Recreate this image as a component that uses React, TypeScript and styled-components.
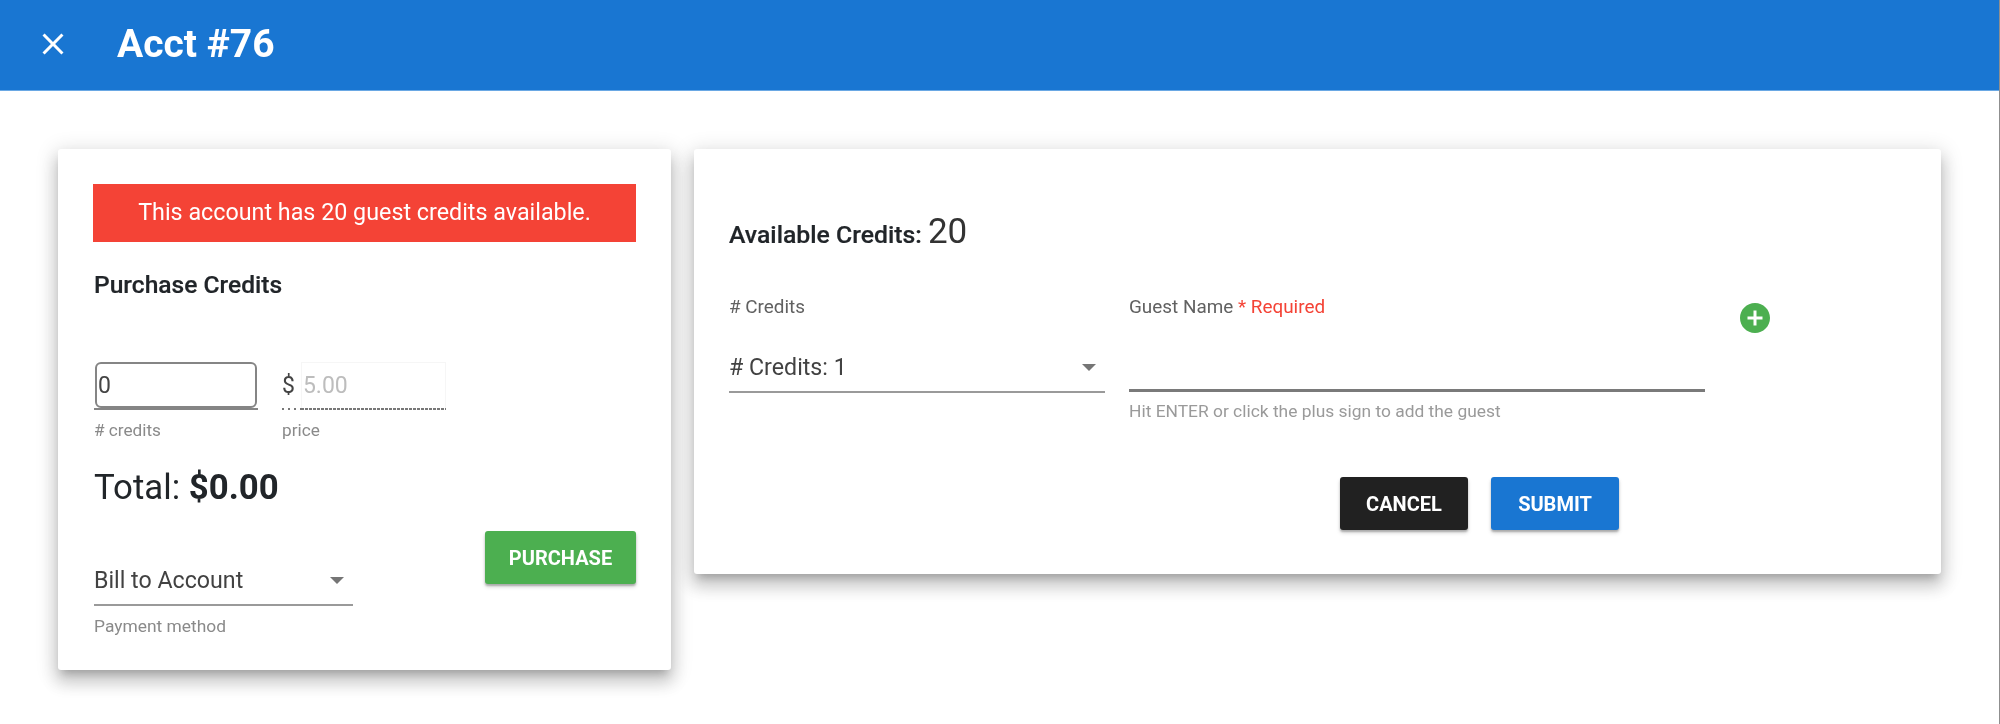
import React from "react";
import styled, { createGlobalStyle } from "styled-components";

const Global = createGlobalStyle`
  html, body { margin: 0; padding: 0; background: #fff; }
  body { font-family: Roboto, "Liberation Sans", sans-serif; color: #212529; }
`;

const Page = styled.div`
  box-sizing: border-box;
  width: 2000px;
  height: 724px;
  overflow: hidden;
  background: #fff;
  border-right: 1px solid #8f8f8f;
  filter: blur(0.35px);
`;

const Header = styled.header`
  box-sizing: border-box;
  height: 91px;
  background: #1976d2;
  border-bottom: 1px solid #6aa8e4;
  display: flex;
  align-items: center;
  color: #fff;
  padding: 0 0 2px 35px;
  gap: 46px;
`;

const CloseBtn = styled.span`
  display: flex;
  width: 36px;
  height: 36px;
`;

const Title = styled.h1`
  margin: 0;
  font-size: 39px;
  font-weight: 700;
  line-height: 1;
`;

const Main = styled.main`
  display: flex;
  align-items: flex-start;
  gap: 23px;
  padding: 58px 0 0 58px;
`;

const Card = styled.section`
  box-sizing: border-box;
  background: #fff;
  border-radius: 3px;
  box-shadow: 0 7px 8px -4px rgba(0,0,0,.2), 0 12px 16px 2px rgba(0,0,0,.14), 0 4px 20px 4px rgba(0,0,0,.12);
`;

const LeftCard = styled(Card)`
  width: 613px;
  height: 521px;
  padding: 35px 35px 0;
  display: flex;
  flex-direction: column;
`;

const RightCard = styled(Card)`
  width: 1247px;
  height: 425px;
  padding: 0 35px;
  display: flex;
  flex-direction: column;
`;

const Alert = styled.div`
  box-sizing: border-box;
  height: 58px;
  padding-bottom: 2px;
  background: #f44336;
  color: #fff;
  font-size: 23.3px;
  display: flex;
  align-items: center;
  justify-content: center;
`;

const SectionTitle = styled.div`
  margin-top: 29px;
  font-size: 24.6px;
  font-weight: 500;
  line-height: 28px;
  padding-left: 1px;
  -webkit-text-stroke: 0.2px currentColor;
`;

const NumberRow = styled.div`
  margin-top: 63px;
  display: flex;
  gap: 25px;
  padding-left: 2px;
`;

const Field = styled.div<{ $w: number }>`
  width: ${(p) => p.$w}px;
  display: flex;
  flex-direction: column;
`;

const CreditInputBox = styled.div`
  box-sizing: border-box;
  height: 46px;
  border: 2px solid #858585;
  border-radius: 6px;
  font-size: 23px;
  display: flex;
  align-items: center;
  padding-left: 1px;
  color: #444;
`;

const SolidLine = styled.div`
  height: 2px;
  margin: 0 -1px;
  background: #858585;
`;

const PriceBox = styled.div`
  height: 46px;
  display: flex;
  align-items: center;
  font-size: 23px;
  color: #444;
`;

const PriceValue = styled.div`
  box-sizing: border-box;
  flex: 1;
  height: 46px;
  margin-left: 6px;
  padding-left: 1px;
  display: flex;
  align-items: center;
  color: #bdbdbd;
  border: 1px solid #f6f6f6;
  border-bottom: none;
`;

const DottedRow = styled.div`
  display: flex;
  height: 2px;
`;

const Dots = styled.div<{ $w?: number; $on: number; $off: number }>`
  ${(p) => (p.$w ? `width: ${p.$w}px;` : "flex: 1;")}
  background: repeating-linear-gradient(
    to right,
    #777 0 ${(p) => p.$on}px,
    transparent ${(p) => p.$on}px ${(p) => p.$on + p.$off}px
  );
`;

const Helper = styled.div<{ $nudge?: number }>`
  margin-top: 10px;
  margin-left: ${(p) => p.$nudge ?? 0}px;
  font-size: 17.2px;
  line-height: 20px;
  color: #8a8a8a;
`;

const Total = styled.div`
  margin-top: 26px;
  padding-left: 1px;
  font-size: 34.8px;
  line-height: 42px;
  color: #212529;
`;

const Bold = styled.b`
  font-weight: 700;
`;

const BottomRow = styled.div`
  margin-top: 23px;
  padding-left: 1px;
  display: flex;
  justify-content: space-between;
  align-items: flex-start;
`;

const PaymentColumn = styled.div`
  margin-top: 25px;
`;

const PaymentHelper = styled(Helper)`
  font-size: 17.4px;
`;

const SelectBox = styled.div<{ $w: number; $h: number }>`
  box-sizing: border-box;
  width: ${(p) => p.$w}px;
  height: ${(p) => p.$h}px;
  display: flex;
  align-items: center;
  justify-content: space-between;
  font-size: 23.2px;
  color: #424242;
  border-bottom: 2px solid #9a9a9a;
`;

const Caret = styled.span`
  width: 0;
  height: 0;
  margin-right: 9px;
  border-left: 7px solid transparent;
  border-right: 7px solid transparent;
  border-top: 7px solid #757575;
`;

const Button = styled.button<{ $bg: string; $w: number }>`
  width: ${(p) => p.$w}px;
  height: 53px;
  border: 0;
  border-radius: 3px;
  background: ${(p) => p.$bg};
  color: #fff;
  font-family: inherit;
  font-size: 20px;
  font-weight: 700;
  padding: 0;
  box-shadow: 0 2px 2px rgba(0,0,0,.24), 0 3px 4px rgba(0,0,0,.14);
`;

const Available = styled.div`
  margin-top: 61px;
  display: flex;
  align-items: baseline;
  gap: 6px;
  font-size: 24.8px;
  font-weight: 500;
  line-height: 44px;
  -webkit-text-stroke: 0.2px currentColor;
`;

const AvailableCount = styled.span`
  font-size: 35px;
  font-weight: 400;
  color: #333;
  -webkit-text-stroke: 0;
`;

const GuestGrid = styled.div`
  margin-top: 39px;
  display: grid;
  grid-template-columns: 376px 576px auto;
  column-gap: 24px;
  align-items: start;
`;

const FieldLabel = styled.div`
  font-size: 18.9px;
  line-height: 22px;
  color: #616161;
`;

const Required = styled.span`
  color: #f44336;
`;

const GapSelect = styled.div`
  margin-top: 25px;
`;

const GuestInput = styled.div`
  box-sizing: border-box;
  margin-top: 23px;
  height: 51px;
  border-bottom: 3px solid #7a7a7a;
`;

const GuestHelp = styled(Helper)`
  margin-top: 9px;
  font-size: 17.4px;
  color: #9a9a9a;
`;

const Plus = styled.span`
  display: flex;
  margin: 4px 0 0 8px;
`;

const Actions = styled.div`
  margin-top: 56px;
  display: flex;
  gap: 23px;
  padding-left: 611px;
`;

export default function App() {
  return (
    <Page>
      <Global />
      <Header>
        <CloseBtn>
          <svg viewBox="0 0 24 24" width="36" height="36" fill="#fff">
            <path d="M19 6.41 17.59 5 12 10.59 6.41 5 5 6.41 10.59 12 5 17.59 6.41 19 12 13.41 17.59 19 19 17.59 13.41 12z" />
          </svg>
        </CloseBtn>
        <Title>Acct #76</Title>
      </Header>
      <Main>
        <LeftCard>
          <Alert>This account has 20 guest credits available.</Alert>
          <SectionTitle>Purchase Credits</SectionTitle>
          <NumberRow>
            <Field $w={162}>
              <CreditInputBox>0</CreditInputBox>
              <SolidLine />
              <Helper $nudge={-1}># credits</Helper>
            </Field>
            <Field $w={164}>
              <PriceBox>
                $<PriceValue>5.00</PriceValue>
              </PriceBox>
              <DottedRow>
                <Dots $w={19} $on={2} $off={4} />
                <Dots $on={3} $off={1} />
              </DottedRow>
              <Helper>price</Helper>
            </Field>
          </NumberRow>
          <Total>
            Total: <Bold>$0.00</Bold>
          </Total>
          <BottomRow>
            <PaymentColumn>
              <SelectBox $w={259} $h={50}>
                Bill to Account
                <Caret />
              </SelectBox>
              <PaymentHelper>Payment method</PaymentHelper>
            </PaymentColumn>
            <Button $bg="#4caf50" $w={151}>PURCHASE</Button>
          </BottomRow>
        </LeftCard>
        <RightCard>
          <Available>
            Available Credits: <AvailableCount>20</AvailableCount>
          </Available>
          <GuestGrid>
            <div>
              <FieldLabel># Credits</FieldLabel>
              <GapSelect>
                <SelectBox $w={376} $h={50}>
                  # Credits: 1
                  <Caret />
                </SelectBox>
              </GapSelect>
            </div>
            <div>
              <FieldLabel>
                Guest Name <Required>* Required</Required>
              </FieldLabel>
              <GuestInput />
              <GuestHelp>Hit ENTER or click the plus sign to add the guest</GuestHelp>
            </div>
            <Plus>
              <svg viewBox="0 0 24 24" width="36" height="36" fill="#4caf50">
                <path d="M12 2C6.48 2 2 6.48 2 12s4.48 10 10 10 10-4.48 10-10S17.52 2 12 2zm5 11h-4v4h-2v-4H7v-2h4V7h2v4h4v2z" />
              </svg>
            </Plus>
          </GuestGrid>
          <Actions>
            <Button $bg="#212121" $w={128}>CANCEL</Button>
            <Button $bg="#1976d2" $w={128}>SUBMIT</Button>
          </Actions>
        </RightCard>
      </Main>
    </Page>
  );
}
